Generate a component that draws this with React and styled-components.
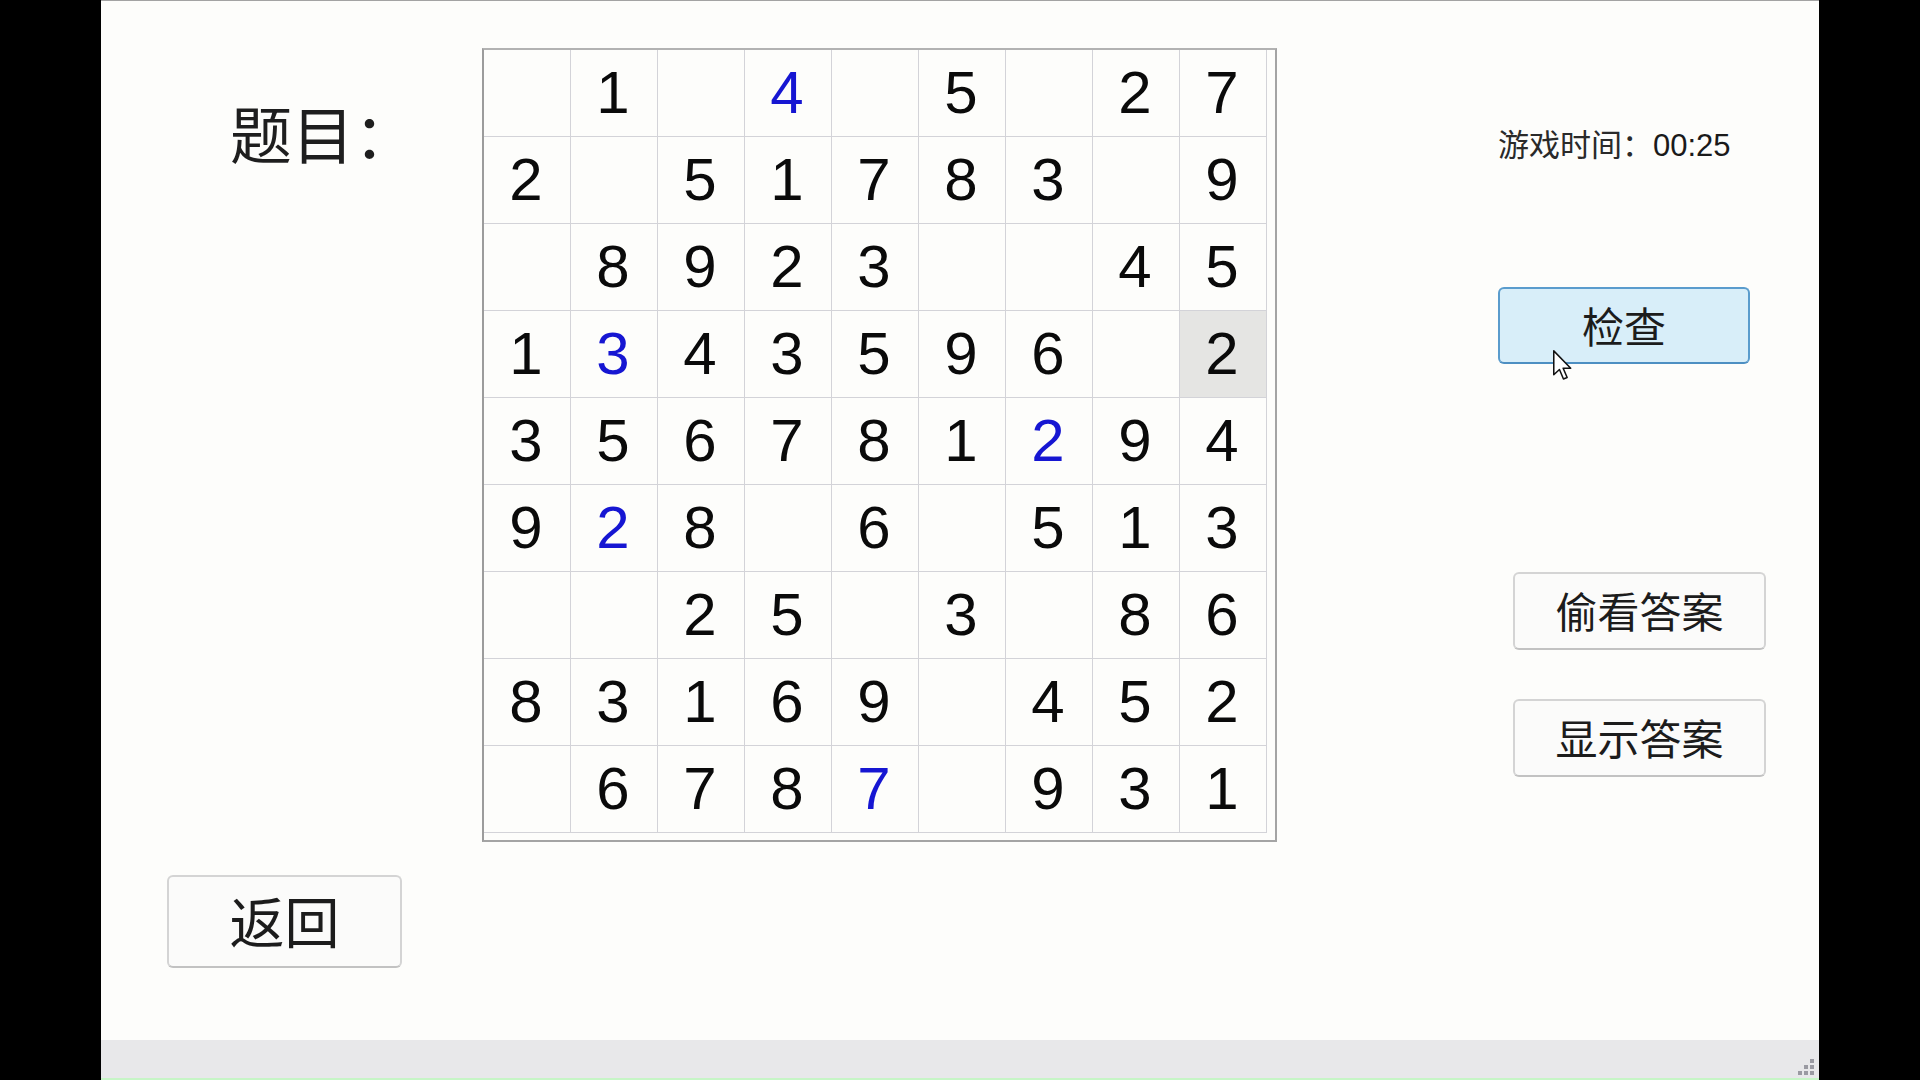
import React from 'react';
import styled, { createGlobalStyle } from 'styled-components';

const GlobalStyle = createGlobalStyle`
  html, body { margin: 0; padding: 0; background: #000; }
  body { width: 1920px; height: 1080px; overflow: hidden; }
  * { box-sizing: border-box; }
`;

const Frame = styled.div`
  width: 1920px;
  height: 1080px;
  background: #000;
  display: flex;
  padding: 0 101px;
`;

const Screen = styled.div`
  flex: 1;
  display: flex;
  flex-direction: column;
  background: #fdfdfb;
  border-top: 1px solid #a3a3a3;
  font-family: "Liberation Sans", "Noto Sans CJK SC", sans-serif;
  color: #111;
`;

const Main = styled.main`
  flex: 1;
  display: grid;
  grid-template-columns: 381px 795px 1fr;
  grid-template-rows: 841px 1fr;
`;

const Title = styled.h1`
  margin: 0;
  padding: 100px 0 0 129px;
  font-family: "Noto Sans CJK SC", sans-serif;
  font-weight: 400;
  font-size: 62px;
  line-height: 1;
  color: #1e1e1e;
`;

const Board = styled.div`
  margin-top: 47px;
  width: 795px;
  height: 794px;
  border: 2px solid #a4a4a4;
  border-top-color: #b2b2b2;
  border-left-color: #9c9c9c;
  padding: 0 8px 6px 0;
`;

const Grid = styled.div`
  display: grid;
  grid-template-columns: repeat(9, 87px);
  grid-template-rows: repeat(9, 87px);
`;

const Cell = styled.div`
  display: flex;
  align-items: center;
  justify-content: center;
  padding-right: 2px;
  border-right: 1px solid #d3d3d8;
  border-bottom: 1px solid #d3d3d8;
  font-size: 60px;
  line-height: 1;
  color: ${(p) => (p.$blue ? '#1616d2' : '#0a0a0a')};
  background: ${(p) => (p.$selected ? '#e5e5e3' : 'transparent')};
`;

const Side = styled.aside`
  display: flex;
  flex-direction: column;
  align-items: flex-start;
  padding-left: 221px;
`;

const Timer = styled.div`
  margin-top: 124px;
  font-size: 31px;
  line-height: 36px;
  color: #1a1a1a;
  white-space: nowrap;
`;

const TimerLabel = styled.span`
  font-family: "Noto Sans CJK SC", sans-serif;
  color: #2a2a2a;
`;

const ButtonSlot = styled.div`
  position: relative;
  margin-top: ${(p) => p.$top}px;
  margin-left: ${(p) => p.$left || 0}px;
`;

const Button = styled.button`
  display: flex;
  align-items: center;
  justify-content: center;
  width: ${(p) => p.$w}px;
  height: ${(p) => p.$h}px;
  padding: 0 0 ${(p) => p.$lift || 0}px 0;
  font-family: "Noto Sans CJK SC", sans-serif;
  font-size: ${(p) => p.$size}px;
  font-weight: 400;
  line-height: 1;
  color: #1c1c1c;
  background: ${(p) => (p.$active ? '#d8eef9' : '#fbfbfa')};
  border: 2px solid ${(p) => (p.$active ? '#5a9ccd' : '#d4d4d4')};
  border-bottom-color: ${(p) => (p.$active ? '#4d8fc2' : '#c2c2c2')};
  border-radius: 6px;
  cursor: pointer;
`;

const BackSlot = styled.div`
  grid-column: 1;
  grid-row: 2;
  padding: 33px 0 0 66px;
`;

const Pointer = styled.svg`
  position: absolute;
  left: 55px;
  top: 63px;
  width: 20px;
  height: 31px;
  pointer-events: none;
`;

const StatusBar = styled.footer`
  height: 40px;
  display: flex;
  justify-content: flex-end;
  align-items: flex-end;
  padding: 0 4px 2px 0;
  background: #e8e8ea;
  border-bottom: 2px solid #c6f5c6;
`;

const puzzle = [
  ['', '1', '', '4b', '', '5', '', '2', '7'],
  ['2', '', '5', '1', '7', '8', '3', '', '9'],
  ['', '8', '9', '2', '3', '', '', '4', '5'],
  ['1', '3b', '4', '3', '5', '9', '6', '', '2s'],
  ['3', '5', '6', '7', '8', '1', '2b', '9', '4'],
  ['9', '2b', '8', '', '6', '', '5', '1', '3'],
  ['', '', '2', '5', '', '3', '', '8', '6'],
  ['8', '3', '1', '6', '9', '', '4', '5', '2'],
  ['', '6', '7', '8', '7b', '', '9', '3', '1'],
];

function Grip() {
  const sq = [
    [12, 0],
    [6, 6],
    [12, 6],
    [0, 12],
    [6, 12],
    [12, 12],
  ];
  return (
    <svg width="17" height="17" viewBox="0 0 17 17">
      {sq.map(([x, y]) => (
        <rect key={`${x}-${y}`} x={x} y={y} width="4" height="4" fill="#9a9aa2" />
      ))}
    </svg>
  );
}

export default function App() {
  return (
    <>
      <GlobalStyle />
      <Frame>
        <Screen>
          <Main>
            <Title>题目：</Title>
            <Board>
              <Grid>
                {puzzle.flatMap((row, r) =>
                  row.map((v, c) => (
                    <Cell key={`${r}-${c}`} $blue={v.endsWith('b')} $selected={v.endsWith('s')}>
                      {v.replace(/[bs]/, '')}
                    </Cell>
                  ))
                )}
              </Grid>
            </Board>
            <Side>
              <Timer>
                <TimerLabel>游戏时间：</TimerLabel>00:25
              </Timer>
              <ButtonSlot $top={123}>
                <Button $active $w={252} $h={77} $size={42} $lift={2}>检查</Button>
                <Pointer viewBox="0 0 13 20">
                  <path
                    d="M0.5 0.5 L0.5 16 L4.2 12.6 L6.8 18.8 L9.2 17.8 L6.6 11.8 L11.5 11.8 Z"
                    fill="#fff"
                    stroke="#111"
                    strokeWidth="1"
                    strokeLinejoin="round"
                  />
                </Pointer>
              </ButtonSlot>
              <ButtonSlot $top={208} $left={15}>
                <Button $w={253} $h={78} $size={42} $lift={2}>偷看答案</Button>
              </ButtonSlot>
              <ButtonSlot $top={49} $left={15}>
                <Button $w={253} $h={78} $size={42} $lift={2}>显示答案</Button>
              </ButtonSlot>
            </Side>
            <BackSlot>
              <Button $w={235} $h={93} $size={55} $lift={4}>返回</Button>
            </BackSlot>
          </Main>
          <StatusBar>
            <Grip />
          </StatusBar>
        </Screen>
      </Frame>
    </>
  );
}
